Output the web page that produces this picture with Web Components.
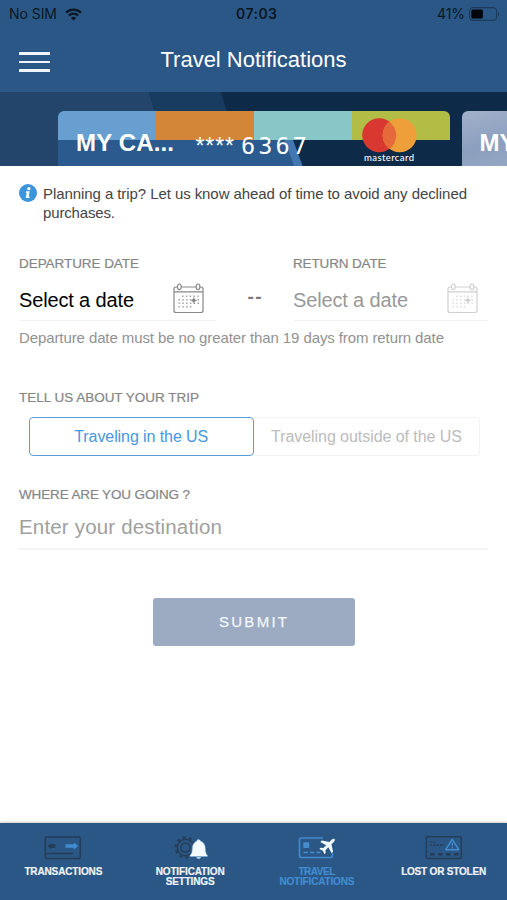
<!DOCTYPE html>
<html lang="en">
<head>
<meta charset="utf-8">
<title>Travel Notifications</title>
<style>
html,body{margin:0;height:100%}
body{font-family:"Liberation Sans",Arial,sans-serif;background:#fff;overflow:hidden}
</style>
</head>
<body>
<travel-app></travel-app>
<script>
function define(name, html, setup){
  customElements.define(name, class extends HTMLElement{
    constructor(){
      super();
      const t=document.createElement('template');
      t.innerHTML=html;
      this.attachShadow({mode:'open'}).appendChild(t.content.cloneNode(true));
    }
    connectedCallback(){ if(setup) setup(this); }
  });
}

/* One line of text, tracked so that it fills the width given in "w". */
define('text-line','<style>:host{display:block;white-space:nowrap;width:max-content}span{display:inline-block}</style><span><slot></slot></span>',el=>{
  const w=parseFloat(el.getAttribute('w')), s=el.shadowRoot.querySelector('span');
  const n=el.textContent.length, fit=s.getBoundingClientRect().width;
  if(w&&fit){ s.style.letterSpacing=((w-fit)/(n-1))+'px'; s.style.marginRight=(-(w-fit)/(n-1))+'px'; }
});

define('status-bar',`<style>
:host{display:grid;grid-template-columns:1fr auto 1fr;align-items:center;height:28px;padding:0 7px 0 9px;color:#0b1725;font:14px/20px Inter,sans-serif}
.l,.r{display:flex;align-items:center}.l{gap:8px}.r{gap:4px;justify-content:flex-end}
.c{font-weight:600;padding-left:4px}svg{display:block}
</style>
<div class="l"><text-line w="48">No SIM</text-line>
<svg width="17" height="13" viewBox="0 0 17 13" fill="none" stroke="#0b1725"><path d="M1 4.6a10.8 10.8 0 0 1 15 0" stroke-width="2.3"/><path d="M3.8 7.6a6.8 6.8 0 0 1 9.4 0" stroke-width="2.2"/><path d="M8.5 12.6 5.9 9.9a3.9 3.9 0 0 1 5.2 0z" fill="#0b1725" stroke="none"/></svg></div>
<div class="c"><text-line w="41">07:03</text-line></div>
<div class="r"><text-line w="28">41%</text-line>
<svg width="31" height="14" viewBox="0 0 31 14"><rect x=".6" y=".6" width="27" height="12.8" rx="3.6" fill="none" stroke="#1c3a5b" stroke-width="1.1"/><rect x="2.4" y="2.4" width="11.5" height="9.2" rx="1.6" fill="#020509"/><path d="M29 4.6q2.4 2.4 0 4.8z" fill="#1c3a5b"/></svg></div>`);

define('nav-header',`<style>
:host{display:grid;grid-template-columns:31px 1fr 31px;align-items:center;height:64px;padding:0 19px;color:#fff;font-size:22px;line-height:26px}
.t{justify-self:center;margin-top:-1px}.m{display:grid;gap:6px;margin-top:4px}.m i{height:2.7px;background:#eff5fa;border-radius:.5px}
</style><div class="m"><i></i><i></i><i></i></div><text-line class="t"><slot></slot></text-line>`,el=>{
  const s=el.shadowRoot.querySelector('text-line').shadowRoot.querySelector('span');
  const d=(186-s.getBoundingClientRect().width)/(el.textContent.length-1);
  s.style.letterSpacing=d+'px'; s.style.marginRight=-d+'px';
});

define('card-carousel',`<style>
:host{display:flex;gap:12px;height:54.5px;padding:19px 0 0 58px;overflow:hidden;background:#0d2a49;position:relative}
.bg{position:absolute;inset:0;z-index:0}
.card{position:relative;flex:none;width:391.5px;height:56px;border-radius:6px 6px 0 0;overflow:hidden;color:#fff}
.stripes{display:grid;grid-template-columns:repeat(4,1fr);height:29px}
.stripes i:nth-child(1){background:#689fd1}.stripes i:nth-child(2){background:#d38637}.stripes i:nth-child(3){background:#87c7c7}.stripes i:nth-child(4){background:#b2bd45}
.low,.body{position:absolute;left:0;top:0}
.body{inset:0;display:flex;padding-left:18px;align-items:flex-start}
.name{font-weight:700;font-size:24px;line-height:28px;margin-top:18px}
.stars{font-size:23px;line-height:24px;margin:22.5px 0 0 21.5px}
.num{font:23.5px/26px "DejaVu Sans Mono",monospace;margin:22px 0 0 7px}
.mc{margin:7px 0 0 54.5px;display:grid;justify-items:center;font:500 9.5px/10px Lato,sans-serif}
.next{background:linear-gradient(165deg,#a3b1cb,#8b9fbe 60%,#95a7c3);width:46px;border-radius:6px 0 0 0}
</style>
<svg class="bg" width="507" height="74"><path d="M0 0H149l22 74H0z" fill="#23446b"/><path d="M149 0h72l22 74h-72z" fill="#183b60"/></svg>
<div class="card"><div class="stripes"><i></i><i></i><i></i><i></i></div>
<svg class="low" width="392" height="56"><path d="M0 29H232l10 27H0z" fill="#2b5a8e"/><path d="M226.500 29h8.500l10 27h-8.500z" fill="#4277b2"/></svg>
<div class="body"><text-line class="name" w="98">MY CA...</text-line><text-line class="stars" w="38.500">****</text-line><text-line class="num" w="66">6367</text-line>
<div class="mc"><svg width="55" height="35"><circle cx="17.200" cy="17.300" r="17" fill="#d8382f"/><circle cx="37.700" cy="17.300" r="17" fill="#ee9f39"/><path d="M27.450 3.700a17 17 0 0 1 0 27.200a17 17 0 0 1 0-27.200z" fill="#e5693a"/></svg><text-line w="50">mastercard</text-line></div></div></div>
<div class="card next"><div class="body"><text-line class="name">MY</text-line></div></div>`);

define('info-note',`<style>:host{display:flex;gap:6px;color:#444;font-size:15px;line-height:19.5px}svg{display:block;margin-top:.5px}</style>
<svg width="18" height="18" viewBox="0 0 18 18"><circle cx="9" cy="9" r="9" fill="#3c94dc"/><circle cx="9.9" cy="4.7" r="1.6" fill="#fff"/><path d="M7 7.3h3.7L9.5 12.6h1.2l-.3 1.3H6.7l1.1-5.2H6.7z" fill="#fff"/></svg>
<div><text-line w="424">Planning a trip? Let us know ahead of time to avoid any declined</text-line><text-line w="72">purchases.</text-line></div>`);

define('field-label','<style>:host{display:block;color:#858585;font-size:13.5px;line-height:16px;-webkit-text-stroke:.2px #858585}</style><slot></slot>');

define('date-field',`<style>
:host{display:block;color:#000;--ic:#888;width:197px}
:host([muted]){color:#999;--ic:#d0d0d0;width:195px}
.row{display:flex;justify-content:space-between;align-items:center;height:49px;border-bottom:1.5px solid #f3f3f3;padding-right:10px;font-size:20px;line-height:24px;box-sizing:border-box}
:host(:not([muted])) .row{padding-right:12px}
text-line{margin-top:7px}
svg{display:block;margin-top:5px}
</style><slot name="label"></slot>
<div class="row"><text-line w="115">Select a date</text-line>
<svg width="31" height="31" viewBox="0 0 31 31" fill="none" stroke="var(--ic)" stroke-width="1.2"><path d="M4.2 4H3Q1 4 1 6v21.500q0 2 2 2h25q2 0 2-2V6q0-2-2-2h-1M8.200 4h14.800M1 8.800h29"/><ellipse cx="6.300" cy="3.800" rx="1.900" ry="2.800"/><ellipse cx="25" cy="3.800" rx="1.900" ry="2.800"/><g stroke-width="1.500" stroke-dasharray="1.500 2.300" opacity=".75"><path d="M9 13.300h17M5.500 16.800h20.500M5.500 20.300h20.500M5.500 23.800h13"/></g><circle cx="20.800" cy="17.400" r="1.800" fill="var(--ic)" stroke="none"/><path d="M20.800 14v6.800M17.500 17.400h6.600" stroke-width=".7"/></svg></div>`);

define('segmented-choice',`<style>
:host{display:grid;grid-template-columns:225.5px 226px;height:39px;font-size:16px;line-height:20px}
div{display:flex;align-items:center;justify-content:center;box-sizing:border-box;padding-top:1px}
.on{border:1.4px solid #5b9dd8;border-radius:4px;color:#4699de}
.off{border:1px solid #f3f3f3;border-left:0;border-radius:0 4px 4px 0;color:#bcbcbc}
</style><div class="on"><text-line w="134">Traveling in the US</text-line></div><div class="off"><text-line w="191">Traveling outside of the US</text-line></div>`);

define('text-field','<style>:host{display:block;height:33px;color:#a0a0a0;font-size:20.5px;line-height:24px;border-bottom:2px solid #f4f4f4}</style><slot></slot>');

define('submit-button','<style>:host{display:flex;align-items:center;justify-content:center;width:202px;height:47.5px;border-radius:3px;background:#9cabc1;color:#f1f6fc;font-size:15px;line-height:18px;-webkit-text-stroke:.25px #f1f6fc;box-sizing:border-box;padding:0 2px 0 0}</style><slot></slot>');

define('tab-item','<style>:host{display:flex;flex-direction:column;align-items:center;color:#eef3f8;font-weight:700;font-size:10px;line-height:10px;padding-top:12px;-webkit-text-stroke:.2px currentColor}:host([active]){color:#438cd0}.i{height:31.5px}</style><div class="i"><slot name="icon"></slot></div><slot></slot>');

define('tab-bar',`<style>
:host{display:grid;grid-template-columns:repeat(4,1fr);height:77px;background:#2a5785;box-shadow:0 -1px 2px #0003}
svg{display:block}
</style>
<tab-item><svg slot="icon" width="38" height="26" fill="none" stroke="#263d58" stroke-width="1.6"><rect x="1.300" y="2" width="35" height="21.500" rx="1"/><path d="M2 18.500h27"/><path d="M4 11l3-2.300v1h4v2.800H7v1z" fill="#263d58" stroke-width=".8"/><path d="M21.500 9.200h8.300V7.500l4.600 3.500-4.600 3.500v-1.700h-8.300z" fill="#438cd0" stroke="none"/></svg><text-line w="78">TRANSACTIONS</text-line></tab-item>
<tab-item><svg slot="icon" width="38" height="26"><g fill="none" stroke="#263d58"><circle cx="14.500" cy="12.500" r="4.600" stroke-width="1.500"/><circle cx="14.500" cy="12.500" r="8.200" stroke-width="1.500"/><circle cx="14.500" cy="12.500" r="10" stroke-width="2.200" stroke-dasharray="3.100 3.180"/></g><path d="M27.400 4.600c1.600 0 2 .9 2 1.500 3.800 1.300 4.900 4.300 5 8.300.1 3 .8 4.400 2 5.800v1.300H19v-1.300c1.600-1.400 2.200-3.100 2.200-6 .1-4 1.400-6.900 4.600-8.100.1-.9.5-1.500 1.600-1.500z" fill="#f4faff" stroke="#6aaeea" stroke-width=".5"/><path d="M25.200 22.200h5q-2.500 3-5 0z" fill="#e6f3ff"/></svg><text-line w="69">NOTIFICATION</text-line><text-line w="49">SETTINGS</text-line></tab-item>
<tab-item active><svg slot="icon" width="38" height="26" fill="none" stroke="#438cd0" stroke-width="1.600"><path d="M25 3H3.500Q1.500 3 1.500 5v15.500q0 2 2 2h29q2 0 2-2V18"/><rect x="5.200" y="7.200" width="6" height="5.800" rx="1" fill="#438cd0" stroke="none"/><path d="M5.500 17.500h17" stroke-dasharray="4.300 2.200"/><path transform="translate(30 10.500) rotate(45)" d="M0-9.200c1.100 0 1.500 1.200 1.500 2.600v3.200L8 .8v2.100L1.500 1v4.100L3.700 7v1.500L0 7.400l-3.700 1.100V7l2.200-1.900V1L-8 2.900V.8l6.500-4.200v-3.200c0-1.400.4-2.600 1.500-2.600z" fill="#f2f9ff" stroke="none"/></svg><text-line w="37">TRAVEL</text-line><text-line w="75">NOTIFICATIONS</text-line></tab-item>
<tab-item><svg slot="icon" width="38" height="26" fill="none" stroke="#263d58" stroke-width="1.500"><rect x="1.300" y="1.700" width="35" height="21.800" rx="1"/><path d="M4.500 7h6.500M4.500 10.200h15" stroke-width="1.200" stroke-dasharray="2.500 1"/><path d="M5 19.300h29" stroke-width="2.600" stroke-dasharray="4.500 3.500"/><path d="M27.200 4.300l6.500 10.400H20.700z" stroke="#438cd0" stroke-linejoin="round"/><path d="M27.200 7.800v3.500m0 1v1.300" stroke="#438cd0" stroke-width="1.300"/></svg><text-line w="85">LOST OR STOLEN</text-line></tab-item>`);

define('travel-app',`<style>
:host{display:flex;flex-direction:column;width:507px;height:900px;background:#fff}
header{background:#2a5785}
main{flex:1;padding:18px 19px 0;display:flex;flex-direction:column;min-height:0}
.dates{display:flex;margin-top:33.5px}
.dash{width:77px;display:flex;justify-content:center;color:#777;font-weight:700;font-size:19px;line-height:20px;padding-top:30.5px;box-sizing:border-box}
.hint{color:#929292;font-size:15px;line-height:18px;margin-top:7.5px}
.trip{margin-top:43px}.seg{margin:11px 0 0 9.5px}.where{margin-top:31.5px}.dest{margin-top:12px}.go{margin:48px 0 0 134px}
</style>
<header><status-bar></status-bar><nav-header>Travel Notifications</nav-header></header>
<card-carousel></card-carousel>
<main>
<info-note></info-note>
<div class="dates"><date-field><field-label slot="label"><text-line w="120">DEPARTURE DATE</text-line></field-label></date-field><div class="dash"><text-line w="14">--</text-line></div><date-field muted><field-label slot="label"><text-line w="93.5">RETURN DATE</text-line></field-label></date-field></div>
<text-line class="hint" w="425">Departure date must be no greater than 19 days from return date</text-line>
<field-label class="trip"><text-line w="180">TELL US ABOUT YOUR TRIP</text-line></field-label>
<segmented-choice class="seg"></segmented-choice>
<field-label class="where"><text-line w="171">WHERE ARE YOU GOING ?</text-line></field-label>
<text-field class="dest"><text-line w="203">Enter your destination</text-line></text-field>
<submit-button class="go"><text-line w="68">SUBMIT</text-line></submit-button>
</main>
<tab-bar></tab-bar>`);
</script>
</body>
</html>
